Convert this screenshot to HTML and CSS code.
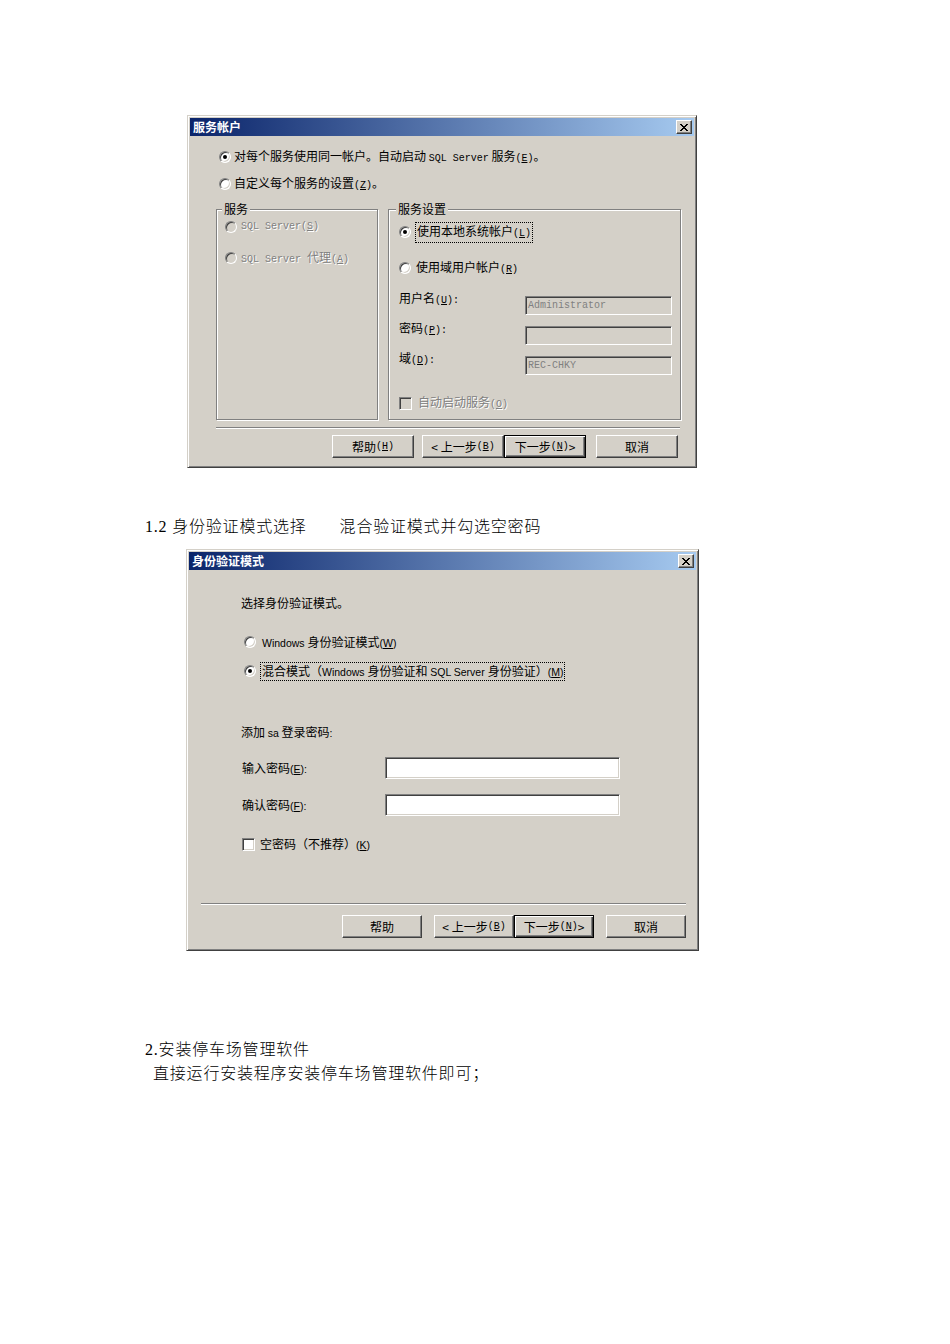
FILE: index.html
```html
<!DOCTYPE html>
<html lang="zh-CN">
  <head>
    <meta charset="UTF-8" />
    <title>SQL Server 安装</title>
    <link rel="stylesheet" href="styles.css">
  </head>

  <body>
    <div class="page">
      <div class="dialog dialog-service">
        <div class="titlebar">
          <span class="title">服务帐户</span>
          <span class="close-btn">
            <svg width="8" height="7" viewBox="0 0 8 7" shape-rendering="crispEdges"><path d="M0 0h2v1H0zM6 0h2v1H6zM1 1h2v1H1zM5 1h2v1H5zM2 2h4v1H2zM3 3h2v1H3zM2 4h4v1H2zM1 5h2v1H1zM5 5h2v1H5zM0 6h2v1H0zM6 6h2v1H6z" fill="#000"/></svg>
          </span>
        </div>
        <div class="dlg-body body-service">
          <div class="opt opt-same"><span class="radio checked"></span><span>对每个服务使用同一帐户。自动启动 <span class="lat">SQL Server</span> 服务<span class="lat">(<u>E</u>)</span>。</span></div>
          <div class="opt opt-custom"><span class="radio"></span><span>自定义每个服务的设置<span class="lat">(<u>Z</u>)</span>。</span></div>

          <div class="groups">
            <fieldset class="group group-left">
              <legend>服务</legend>
              <div class="opt disabled svc-1"><span class="radio off"></span><span class="lat">SQL Server(<u>S</u>)</span></div>
              <div class="opt disabled svc-2"><span class="radio off"></span><span><span class="lat">SQL Server </span>代理<span class="lat">(<u>A</u>)</span></span></div>
            </fieldset>
            <fieldset class="group group-right">
              <legend>服务设置</legend>
              <div class="opt acct-local"><span class="radio checked"></span><span class="focus">使用本地系统帐户<span class="lat">(<u>L</u>)</span></span></div>
              <div class="opt acct-domain"><span class="radio"></span><span>使用域用户帐户<span class="lat">(<u>R</u>)</span></span></div>
              <div class="field field-first"><span class="field-label">用户名<span class="lat">(<u>U</u>):</span></span><span class="input grey"><span class="lat">Administrator</span></span></div>
              <div class="field"><span class="field-label">密码<span class="lat">(<u>P</u>):</span></span><span class="input grey"></span></div>
              <div class="field"><span class="field-label">域<span class="lat">(<u>D</u>):</span></span><span class="input grey"><span class="lat">REC-CHKY</span></span></div>
              <div class="opt disabled autostart"><span class="check off"></span><span>自动启动服务<span class="lat">(<u>O</u>)</span></span></div>
            </fieldset>
          </div>

          <div class="sep"></div>
          <div class="buttons">
            <span class="btn btn-help">帮助<span class="lat">(<u>H</u>)</span></span>
            <span class="btn">&lt; 上一步<span class="lat">(<u>B</u>)</span></span>
            <span class="btn default">下一步<span class="lat">(<u>N</u>)</span> &gt;</span>
            <span class="btn btn-cancel">取消</span>
          </div>
        </div>
      </div>

      <p class="doc-line heading-auth">1.2 身份验证模式选择<span class="gap"></span>混合验证模式并勾选空密码</p>

      <div class="dialog dialog-auth">
        <div class="titlebar">
          <span class="title">身份验证模式</span>
          <span class="close-btn">
            <svg width="8" height="7" viewBox="0 0 8 7" shape-rendering="crispEdges"><path d="M0 0h2v1H0zM6 0h2v1H6zM1 1h2v1H1zM5 1h2v1H5zM2 2h4v1H2zM3 3h2v1H3zM2 4h4v1H2zM1 5h2v1H1zM5 5h2v1H5zM0 6h2v1H0zM6 6h2v1H6z" fill="#000"/></svg>
          </span>
        </div>
        <div class="dlg-body body-auth">
          <div class="intro">选择身份验证模式。</div>
          <div class="opt opt-win"><span class="radio"></span><span><span class="en">Windows </span>身份验证模式<span class="en">(<u>W</u>)</span></span></div>
          <div class="opt opt-mixed"><span class="radio checked"></span><span class="focus">混合模式（<span class="en">Windows </span>身份验证和 <span class="en">SQL Server </span>身份验证）<span class="en">(<u>M</u>)</span></span></div>

          <div class="sa-line">添加 <span class="en">sa</span> 登录密码<span class="en">:</span></div>
          <div class="field field-pwd"><span class="field-label">输入密码<span class="en">(<u>E</u>):</span></span><span class="input white"></span></div>
          <div class="field field-confirm"><span class="field-label">确认密码<span class="en">(<u>F</u>):</span></span><span class="input white"></span></div>
          <div class="opt opt-blank"><span class="check"></span><span>空密码（不推荐）<span class="en">(<u>K</u>)</span></span></div>

          <div class="sep"></div>
          <div class="buttons">
            <span class="btn btn-help">帮助</span>
            <span class="btn">&lt; 上一步<span class="lat">(<u>B</u>)</span></span>
            <span class="btn default">下一步<span class="lat">(<u>N</u>)</span> &gt;</span>
            <span class="btn btn-cancel">取消</span>
          </div>
        </div>
      </div>

      <p class="doc-line heading-soft">2.安装停车场管理软件</p>
      <p class="doc-line indent">直接运行安装程序安装停车场管理软件即可；</p>
    </div>
  </body>
</html>
```

FILE: styles.css
```css
body {
  margin: 0;
  background: #fff;
  font-family: "Liberation Serif", "Noto Sans CJK SC", serif;
  color: #000;
}

.page {
  padding-top: 115px;
}

/* window frame */
.dialog {
  box-sizing: border-box;
  display: flex;
  flex-direction: column;
  padding: 2px;
  background: #d4d0c8;
  border: 1px solid;
  border-color: #d4d0c8 #404040 #404040 #d4d0c8;
  box-shadow: inset 1px 1px #fff, inset -1px -1px #808080;
  font-family: "Noto Sans CJK SC", sans-serif;
  font-size: 12px;
  line-height: 16px;
}

.dialog-service {
  margin-left: 187px;
  width: 510px;
  height: 353px;
}

.dialog-auth {
  margin-left: 186px;
  margin-top: 13px;
  width: 513px;
  height: 402px;
}

.titlebar {
  display: flex;
  align-items: center;
  justify-content: space-between;
  height: 18px;
  padding: 0 2px 0 3px;
  background: linear-gradient(to right, #0a246a, #a6caf0);
  color: #fff;
  font-weight: bold;
}

.close-btn {
  box-sizing: border-box;
  display: flex;
  align-items: center;
  justify-content: center;
  width: 16px;
  height: 14px;
  background: #d4d0c8;
  border: 1px solid;
  border-color: #fff #404040 #404040 #fff;
  box-shadow: inset -1px -1px #808080;
}

.lat {
  font-family: "Liberation Mono", monospace;
  font-size: 10px;
}

.en {
  font-family: "Liberation Sans", sans-serif;
  font-size: 10.5px;
}

/* controls */
.opt {
  display: flex;
  align-items: center;
  height: 16px;
  gap: 4px;
  white-space: nowrap;
}

.opt.disabled {
  color: #808080;
  text-shadow: 1px 1px #fff;
}

.radio {
  box-sizing: border-box;
  flex-shrink: 0;
  display: inline-flex;
  align-items: center;
  justify-content: center;
  width: 12px;
  height: 12px;
  border-radius: 50%;
  border: 1px solid;
  border-color: #808080 #fff #fff #808080;
  box-shadow: inset 1px 1px #404040, inset -1px -1px #d4d0c8;
  background: #fff;
}

.radio.checked::after {
  content: "";
  width: 4px;
  height: 4px;
  border-radius: 50%;
  background: #000;
}

.radio.off,
.check.off {
  background: #d4d0c8;
}

.check {
  box-sizing: border-box;
  flex-shrink: 0;
  width: 13px;
  height: 13px;
  border: 1px solid;
  border-color: #808080 #fff #fff #808080;
  box-shadow: inset 1px 1px #404040, inset -1px -1px #d4d0c8;
  background: #fff;
}

.focus {
  outline: 1px dotted #000;
  padding: 0 1px;
}

.field {
  display: flex;
  align-items: center;
}

.input {
  box-sizing: border-box;
  display: flex;
  align-items: center;
  padding-left: 2px;
  border: 1px solid;
  border-color: #808080 #fff #fff #808080;
  box-shadow: inset 1px 1px #404040, inset -1px -1px #d4d0c8;
}

.input.grey {
  width: 147px;
  height: 19px;
  background: #d4d0c8;
  color: #808080;
}

.input.white {
  width: 235px;
  height: 22px;
  background: #fff;
}

.sep {
  border-top: 1px solid #808080;
  border-bottom: 1px solid #fff;
}

.buttons {
  display: flex;
  justify-content: flex-end;
}

.btn {
  box-sizing: border-box;
  display: flex;
  align-items: center;
  justify-content: center;
  height: 23px;
  background: #d4d0c8;
  border: 1px solid;
  border-color: #fff #404040 #404040 #fff;
  box-shadow: inset -1px -1px #808080;
  white-space: nowrap;
}

.btn.default {
  border-color: #000;
  box-shadow: inset 1px 1px #fff, inset -1px -1px #404040, inset -2px -2px #808080;
}

/* 服务帐户 */
.body-service {
  padding: 0 13px 0 26px;
}

.body-service .opt-same {
  margin: 13px 0 0 3px;
  gap: 3px;
}

.body-service .opt-custom {
  margin: 11px 0 0 3px;
  gap: 3px;
}

.groups {
  display: flex;
  gap: 10px;
  height: 218px;
  margin-top: 10px;
}

.group {
  box-sizing: border-box;
  min-width: 0;
  margin: 0;
  padding: 0;
  border: 1px solid #808080;
  box-shadow: inset 1px 1px #fff, 1px 1px #fff;
}

.group legend {
  margin-left: -3px;
  padding: 0 2px;
  line-height: 14px;
  background: #d4d0c8;
}

.group-left {
  width: 162px;
  padding-left: 8px;
}

.group-right {
  flex: 1;
  padding-left: 10px;
}

.svc-1 {
  margin-top: 3px;
}

.svc-2 {
  margin-top: 15px;
}

.acct-local {
  margin-top: 8px;
  gap: 5px;
}

.acct-domain {
  margin-top: 20px;
  gap: 5px;
}

.group-right .field {
  margin-top: 11px;
  align-items: flex-start;
}

.group-right .field-first {
  margin-top: 20px;
}

.group-right .field-label {
  width: 126px;
  margin-top: -6px;
}

.autostart {
  margin-top: 21px;
  height: 14px;
  gap: 6px;
}

.body-service .sep {
  margin: 7px 1px 0 0;
}

.body-service .buttons {
  margin-top: 6px;
  padding-right: 3px;
}

.body-service .btn {
  width: 82px;
}

.body-service .btn-help {
  margin-right: 8px;
}

.body-service .btn-cancel {
  margin-left: 10px;
}

/* 身份验证模式 */
.body-auth {
  padding: 0 10px 0 52px;
}

.intro {
  margin-top: 25px;
}

.body-auth .opt-win {
  margin: 23px 0 0 3px;
  gap: 6px;
}

.body-auth .opt-mixed {
  margin: 13px 0 0 3px;
  gap: 5px;
}

.sa-line {
  margin-top: 45px;
}

.body-auth .field {
  height: 22px;
  margin-left: 1px;
}

.field-pwd {
  margin-top: 16px;
}

.field-confirm {
  margin-top: 15px;
}

.body-auth .field-label {
  width: 143px;
}

.opt-blank {
  margin: 20px 0 0 1px;
  gap: 5px;
}

.body-auth .sep {
  margin: 51px 0 0 -40px;
}

.body-auth .buttons {
  margin-top: 10px;
}

.body-auth .btn {
  width: 80px;
}

.body-auth .btn-help {
  margin-right: 12px;
}

.body-auth .btn-cancel {
  margin-left: 12px;
}

/* document text */
.doc-line {
  margin: 0 0 0 145px;
  font-size: 16px;
  line-height: 18px;
  letter-spacing: 0.8px;
  font-weight: 300;
}

.heading-auth {
  margin-top: 50px;
}

.gap {
  display: inline-block;
  width: 33px;
}

.heading-soft {
  margin-top: 90px;
}

.indent {
  margin-left: 153px;
  margin-top: 6px;
}
```
